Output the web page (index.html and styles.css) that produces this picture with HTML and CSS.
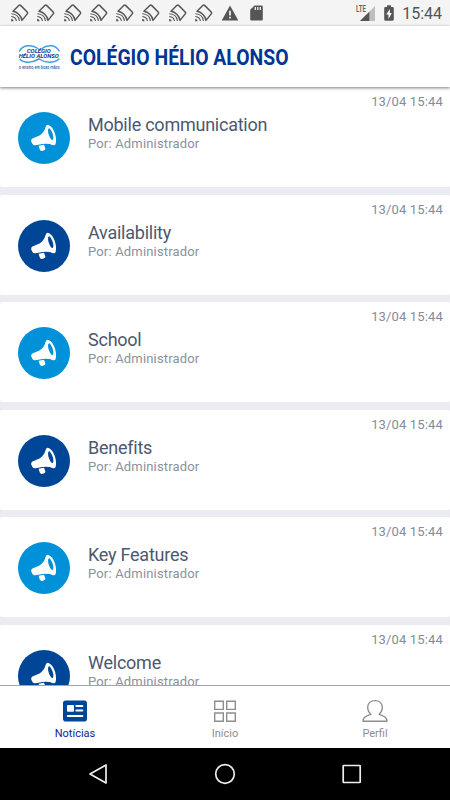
FILE: index.html
```html
<!DOCTYPE html>
<html lang="pt-BR">
<head>
    <meta charset="UTF-8">
    <title>Colégio Hélio Alonso</title>
    <link rel="stylesheet" href="styles.css">
</head>
<body>
    <!-- Shared icons -->
    <svg class="sprite">
        <symbol id="cast" viewBox="0 0 18 18">
            <path d="M2 7.3 8 1.3Q8.8.7 9.6 1.4L16.2 8Q16.9 8.8 16.4 9.6L11 16.4Q10.3 12.5 7.8 10.2 5.2 7.8 2 7.3Z" fill="none" stroke="#555" stroke-width="1.5" stroke-linejoin="round"/>
            <path d="M.3 9.8Q7.8 10.2 8.4 17M.3 12.5Q5 13 5.4 17" fill="none" stroke="#555" stroke-width="1.1"/>
            <path d="M.2 14.8Q2.4 15 2.7 17.2H.2Z" fill="#555"/>
        </symbol>
        <symbol id="horn" viewBox="0 0 52 52">
            <path d="M14.4 26.6 21.5 23.6Q26.2 20.3 27.6 15 28.4 12.2 30.6 12.9 34.8 14.6 37 21.5 38.7 27.8 37.6 32Q37 33.8 35 33.2 30.7 31.2 24.5 32L17.4 33.2Q15.4 33.6 14.5 32.1L13.2 29.5Q12.8 27.4 14.4 26.6Z" fill="#fff"/>
            <ellipse class="hole" cx="32.7" cy="22.2" rx="2" ry="6.1" transform="rotate(-18 32.7 22.2)"/>
            <path d="M20.6 33.7 26 32.8 27.4 36.4Q27.5 38 25.6 38.5L23.7 38.9Q22.2 38.8 21.8 37.5Z" fill="#fff"/>
        </symbol>
    </svg>

    <div class="status-bar">
        <div class="notifications">
            <svg><use href="#cast"/></svg>
            <svg><use href="#cast"/></svg>
            <svg><use href="#cast"/></svg>
            <svg><use href="#cast"/></svg>
            <svg><use href="#cast"/></svg>
            <svg><use href="#cast"/></svg>
            <svg><use href="#cast"/></svg>
            <svg><use href="#cast"/></svg>
        </div>
        <svg class="warning" viewBox="0 0 18 16">
            <path d="M9 .5 17.3 15.5H.7Z" fill="#555"/>
            <path d="M9 5.8v4.6M9 11.7v1.9" stroke="#f4f4f4" stroke-width="1.7"/>
        </svg>
        <svg class="sd-card" viewBox="0 0 13 16">
            <path d="M4.5.5h7Q12.8.5 12.8 1.8v12.4q0 1.3-1.3 1.3h-10Q.2 15.5.2 14.2V4.8Z" fill="#555"/>
            <path d="M5.3 2v3M7.8 2v3M10.3 2v3" stroke="#eee" stroke-width="1.3"/>
        </svg>
        <div class="system">
            <span class="lte">LTE</span>
            <svg class="signal" viewBox="0 0 15 15">
                <path d="M15 0V15H0Z" fill="#bdbdbd"/>
                <path d="M9.3 5.7V15H0Z" fill="#555"/>
            </svg>
            <svg class="battery" viewBox="0 0 10 16">
                <path d="M3 .3h4V2h1.7Q9.8 2 9.8 3.1v11.5q0 1.1-1.1 1.1H1.3Q.2 15.7.2 14.6V3.1Q.2 2 1.3 2H3Z" fill="#555"/>
                <path d="M5.8 4 2.3 9.4H4.5V14L7.8 8.1H5.8Z" fill="#fff"/>
            </svg>
            <span class="clock">15:44</span>
        </div>
    </div>

    <header class="header">
        <svg class="logo" viewBox="0 0 44 28">
            <g fill="none" stroke="#3d9fe0" stroke-linecap="round">
                <path d="M1.5 7C5 .7 14 .4 20 4.5M24 4.5C29 .4 38 .7 41 7" stroke-width="1.5"/>
                <path d="M2 15.3C6 19.5 14 19 21 15 27 19 36 19.5 41 15" stroke-width="1.5"/>
            </g>
            <text x="8.8" y="9" textLength="24" lengthAdjust="spacingAndGlyphs" class="logo-name">COLÉGIO</text>
            <text x=".8" y="13.8" textLength="40" lengthAdjust="spacingAndGlyphs" class="logo-name">HÉLIO ALONSO</text>
            <text x=".8" y="24.5" textLength="41" lengthAdjust="spacingAndGlyphs" class="logo-motto">o ensino em boas mãos</text>
        </svg>
        <h1>COLÉGIO HÉLIO ALONSO</h1>
    </header>

    <main class="feed">
        <article class="card">
            <svg class="avatar light"><use href="#horn"/></svg>
            <div class="info">
                <h2>Mobile communication</h2>
                <p>Por: Administrador</p>
            </div>
            <time>13/04 15:44</time>
        </article>
        <article class="card">
            <svg class="avatar dark"><use href="#horn"/></svg>
            <div class="info">
                <h2>Availability</h2>
                <p>Por: Administrador</p>
            </div>
            <time>13/04 15:44</time>
        </article>
        <article class="card">
            <svg class="avatar light"><use href="#horn"/></svg>
            <div class="info">
                <h2>School</h2>
                <p>Por: Administrador</p>
            </div>
            <time>13/04 15:44</time>
        </article>
        <article class="card">
            <svg class="avatar dark"><use href="#horn"/></svg>
            <div class="info">
                <h2>Benefits</h2>
                <p>Por: Administrador</p>
            </div>
            <time>13/04 15:44</time>
        </article>
        <article class="card">
            <svg class="avatar light"><use href="#horn"/></svg>
            <div class="info">
                <h2>Key Features</h2>
                <p>Por: Administrador</p>
            </div>
            <time>13/04 15:44</time>
        </article>
        <article class="card">
            <svg class="avatar dark"><use href="#horn"/></svg>
            <div class="info">
                <h2>Welcome</h2>
                <p>Por: Administrador</p>
            </div>
            <time>13/04 15:44</time>
        </article>
    </main>

    <nav class="tabs">
        <a class="tab active">
            <svg viewBox="0 0 26 24">
                <rect x="1" y="1.5" width="24" height="21" rx="2.8" fill="#004696"/>
                <rect x="5" y="6" width="7" height="6.8" rx="1" fill="#fff"/>
                <path d="M14.3 7h6M14.3 11.5h6M5.8 17h14.5" stroke="#fff" stroke-width="2" stroke-linecap="round"/>
            </svg>
            <span>Notícias</span>
        </a>
        <a class="tab">
            <svg viewBox="0 0 26 24">
                <path d="M2.7 2.2h8.6v8.2H2.7ZM14.7 2.2h8.6v8.2h-8.6ZM2.7 14h8.6v8.2H2.7ZM14.7 14h8.6v8.2h-8.6Z" fill="none" stroke="#8e8e8e" stroke-width="1.4"/>
            </svg>
            <span>Início</span>
        </a>
        <a class="tab">
            <svg viewBox="0 0 26 24">
                <path d="M9 15.2C6.5 13.4 5.6 10.8 5.7 8 5.9 4 9 1.6 13 1.6S20.1 4 20.3 8C20.4 10.8 19.5 13.4 17 15.2 21 17 25 17.5 25 22.3H1C1 17.5 5 17 9 15.2Z" fill="none" stroke="#8e8e8e" stroke-width="1.4" stroke-linejoin="round"/>
            </svg>
            <span>Perfil</span>
        </a>
    </nav>

    <div class="android-nav">
        <svg viewBox="0 0 24 24"><path d="M19 3V21L3 12Z"/></svg>
        <svg viewBox="0 0 24 24"><circle cx="12" cy="12" r="9.3"/></svg>
        <svg viewBox="0 0 24 24"><rect x="3.2" y="3.5" width="17" height="17" rx=".6"/></svg>
    </div>
</body>
</html>
```
FILE: styles.css
```css
* {
    margin: 0;
    padding: 0;
    box-sizing: border-box;
}

body {
    width: 450px;
    height: 800px;
    display: flex;
    flex-direction: column;
    overflow: hidden;
    background: #fff;
    font-family: Roboto, "Liberation Sans", sans-serif;
}

svg {
    display: block;
    flex-shrink: 0;
}

.sprite {
    display: none;
}

/* Android status bar */
.status-bar {
    height: 26px;
    flex-shrink: 0;
    display: flex;
    align-items: center;
    padding: 0 8px 0 11px;
    background: #f4f4f4;
}

.notifications {
    display: flex;
    gap: 8.25px;
}

.notifications svg {
    width: 18px;
    height: 18px;
}

.warning {
    width: 18px;
    height: 16px;
    margin-left: 8px;
}

.sd-card {
    width: 13px;
    height: 16px;
    margin-left: 11px;
}

.system {
    display: flex;
    align-items: center;
    margin-left: auto;
}

.lte {
    align-self: flex-start;
    margin: 3px -10px 0 0;
    font-size: 9px;
    font-weight: bold;
    line-height: 9px;
    color: #666;
    transform: scaleX(0.68);
    transform-origin: left;
}

.signal {
    width: 15px;
    height: 15px;
}

.battery {
    width: 10px;
    height: 16px;
    margin: 0 8px 0 9px;
}

.clock {
    font-size: 16px;
    line-height: 20px;
    padding-top: 2px;
    color: #555;
}

/* School header */
.header {
    height: 61px;
    flex-shrink: 0;
    display: flex;
    align-items: center;
    padding: 2px 0 0 18px;
    background: #fff;
    box-shadow: 0 1px 3px rgba(0, 0, 0, 0.5);
    z-index: 1;
}

.logo {
    width: 44px;
    height: 28px;
}

.logo-name {
    font-size: 5.4px;
    font-weight: bold;
    font-style: italic;
    fill: #08378e;
}

.logo-motto {
    font-size: 4.6px;
    font-weight: 500;
    fill: #2d62ac;
}

.header h1 {
    margin: 0 0 2px 8px;
    font-size: 22.5px;
    font-weight: bold;
    line-height: 26px;
    white-space: nowrap;
    color: #003594;
    transform: scaleX(0.861);
    transform-origin: left;
}

/* News list */
.feed {
    flex: 1;
    min-height: 0;
    display: flex;
    flex-direction: column;
    gap: 7.5px;
    overflow: hidden;
    background: #ebebf2;
}

.card {
    height: 100px;
    flex-shrink: 0;
    display: flex;
    align-items: flex-start;
    padding: 0 7px 0 18px;
    background: #fff;
    border-radius: 2px;
}

.avatar {
    width: 52px;
    height: 52px;
    margin-top: 25px;
    border-radius: 50%;
}

.light {
    background: #0091d8;
    fill: #0091d8;
}

.dark {
    background: #004696;
    fill: #004696;
}

.info {
    flex: 1;
    margin: 27px 0 0 18px;
}

.info h2 {
    font-size: 18px;
    font-weight: normal;
    line-height: 22px;
    letter-spacing: -0.24px;
    white-space: nowrap;
    color: #4b5870;
}

.info p {
    font-size: 13px;
    line-height: 16px;
    letter-spacing: 0.17px;
    color: #8b919e;
}

.card time {
    margin: 7px 0 0 -80px;
    font-size: 13px;
    line-height: 16px;
    letter-spacing: 0.15px;
    color: #858c99;
}

/* Bottom tabs */
.tabs {
    height: 63px;
    flex-shrink: 0;
    display: flex;
    background: #fff;
    border-top: 1px solid #a3a3ab;
}

.tab {
    flex: 1;
    display: flex;
    flex-direction: column;
    align-items: center;
    padding-top: 13px;
    font-size: 11px;
    line-height: 14px;
    color: #8e8e8e;
}

.tab svg {
    width: 26px;
    height: 24px;
    margin-bottom: 4px;
}

.active {
    color: #0a1fa0;
}

/* Android navigation */
.android-nav {
    height: 52px;
    flex-shrink: 0;
    display: flex;
    align-items: center;
    justify-content: center;
    gap: 102.5px;
    background: #000;
}

.android-nav svg {
    width: 24px;
    height: 24px;
    fill: none;
    stroke: #eee;
    stroke-width: 1.7;
    stroke-linejoin: round;
}
```
